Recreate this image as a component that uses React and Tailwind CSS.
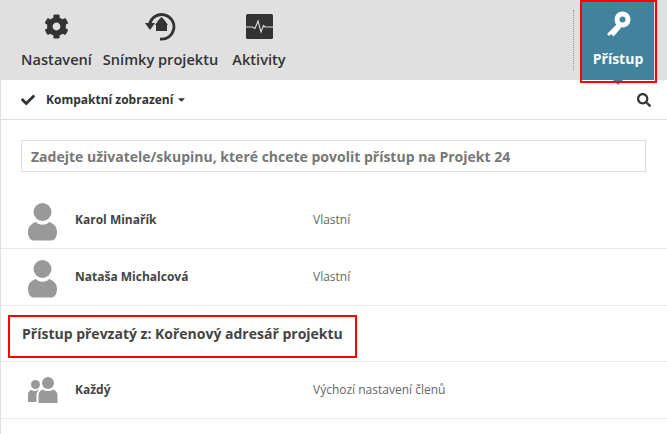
import { FaCog, FaCheck, FaSearch, FaCaretDown } from "react-icons/fa";

function SnapshotIcon() {
  return (
    <svg width="32" height="30" viewBox="0 0 32 30" fill="none">
      <path d="M4.8 12.5 A12.3 12.3 0 1 1 15 28" stroke="#333" strokeWidth="2.8" />
      <path d="M0 12 H10 L5 19 Z" fill="#333" />
      <path d="M16.5 6 L19 8.5 L23 14 H22 V20 H11 V14 H10 L14 8.5 Z" fill="#333" />
    </svg>
  );
}

function ActivityIcon() {
  return (
    <svg width="27" height="25" viewBox="0 0 27 25">
      <rect width="27" height="25" rx="1.5" fill="#333" />
      <path d="M0 13 H6.5 L9 14.5 L12 7 L15 18 L17.5 11.5 L19 13 H27" fill="none" stroke="#e0e0e0" strokeWidth="1.1" />
    </svg>
  );
}

function KeyIcon() {
  return (
    <svg width="28" height="32" viewBox="0 0 28 32">
      <path d="M13 15 L3 25 L5 27 L7 25 L9.5 27.5 L17 19 Z" fill="#fff" />
      <circle cx="18.5" cy="10.5" r="5.5" fill="none" stroke="#fff" strokeWidth="5" />
    </svg>
  );
}

function UserIcon() {
  return (
    <svg width="30" height="38" viewBox="0 0 30 38" className="mt-[3px]">
      <circle cx="14.5" cy="9" r="9" fill="#999" />
      <path d="M0 29 C0 23 4 20.5 8 19 C10.5 22.5 18.5 22.5 21 19 C25 20.5 29 23 29 29 C29 35 26 37.5 23 37.5 H6 C3 37.5 0 35 0 29 Z" fill="#999" />
    </svg>
  );
}

function GroupIcon() {
  return (
    <svg width="30" height="30" viewBox="0 0 30 30" className="mt-[3px]">
      <circle cx="7.5" cy="7.5" r="4.5" fill="#999" />
      <path d="M0 25 V17 C0 15 1.5 13.5 3.5 13 C5 14.5 8 14.5 9.5 13 L10.5 13.5 C9 15 8.5 16.5 8.5 18 V25 Z" fill="#999" />
      <circle cx="20" cy="6" r="6" fill="#999" />
      <path d="M10.5 26 V18 C10.5 15 12.5 13.5 15 12.5 C17 14.5 23 14.5 25 12.5 C27.5 13.5 29.5 15 29.5 18 V26 Z" fill="#999" />
    </svg>
  );
}

function ToolButton({ icon, label, className }) {
  return (
    <div className={`flex flex-col items-center ${className}`}>
      <div className="h-[30px] flex items-center justify-center">{icon}</div>
      <span className="mt-[8px] text-[14.6px] leading-[20px] font-semibold text-[#333] whitespace-nowrap">{label}</span>
    </div>
  );
}

function MemberRow({ icon, name, role }) {
  return (
    <div className="h-[57px] flex items-center border-b border-[#e8e8e8]">
      <div className="w-[74px] pl-[27px] flex-none">{icon}</div>
      <div className="w-[238px] flex-none text-[12px] font-bold text-[#444]">{name}</div>
      <div className="text-[12px] text-[#666]">{role}</div>
    </div>
  );
}

export default function App() {
  return (
    <div className="relative w-[667px] h-[434px] overflow-hidden bg-white border-l border-[#e0e0e0] font-['Open_Sans',sans-serif]">
      <div className="h-[80px] bg-[#e0e0e0] flex">
        <div className="flex pt-[11px] pl-[19px] flex-1">
          <ToolButton icon={<FaCog size={25} color="#333" />} label="Nastavení" className="w-[73px]" />
          <ToolButton icon={<SnapshotIcon />} label="Snímky projektu" className="w-[117px] ml-[9px]" />
          <ToolButton icon={<ActivityIcon />} label="Aktivity" className="w-[56px] ml-[12px]" />
        </div>
        <div className="my-[10px] mr-[8px] border-r border-dotted border-[#999]" />
        <div className="relative w-[72px] mr-[13px] bg-[#43829c] flex flex-col items-center pt-[9px]">
          <KeyIcon />
          <span className="mt-[8px] text-[14px] font-bold leading-[20px] text-white">Přístup</span>
          <div className="absolute left-[31px] top-[80px] w-0 h-0 border-x-[5px] border-x-transparent border-t-[5px] border-t-[#43829c]" />
        </div>
      </div>

      <div className="h-[40px] flex items-center border-b border-[#ddd] pl-[20px] pr-[16px]">
        <FaCheck size={14} color="#333" />
        <span className="ml-[11px] text-[12px] font-bold text-[#333]">Kompaktní zobrazení</span>
        <FaCaretDown size={11} color="#333" className="ml-[3px]" />
        <FaSearch size={14} color="#333" className="ml-auto" />
      </div>

      <div className="mx-[20px] my-[20px] h-[32px] border border-[#ddd] flex items-center pl-[9px] text-[14px] font-bold text-[#777] w-[625px]">
        Zadejte uživatele/skupinu, které chcete povolit přístup na Projekt 24
      </div>

      <MemberRow icon={<UserIcon />} name="Karol Minařík" role="Vlastní" />
      <MemberRow icon={<UserIcon />} name="Nataša Michalcová" role="Vlastní" />

      <div className="h-[56px] flex items-center border-b border-[#e8e8e8] pl-[21px] text-[14px] font-bold text-[#444]">
        Přístup převzatý z: Kořenový adresář projektu
      </div>

      <MemberRow icon={<GroupIcon />} name="Každý" role="Výchozí nastavení členů" />

      <div className="absolute left-[7px] top-[315px] w-[349px] h-[43px] border-2 border-[#f00]" />
      <div className="absolute left-[579px] top-[0px] w-[77px] h-[83px] border-2 border-[#f00]" />
    </div>
  );
}
